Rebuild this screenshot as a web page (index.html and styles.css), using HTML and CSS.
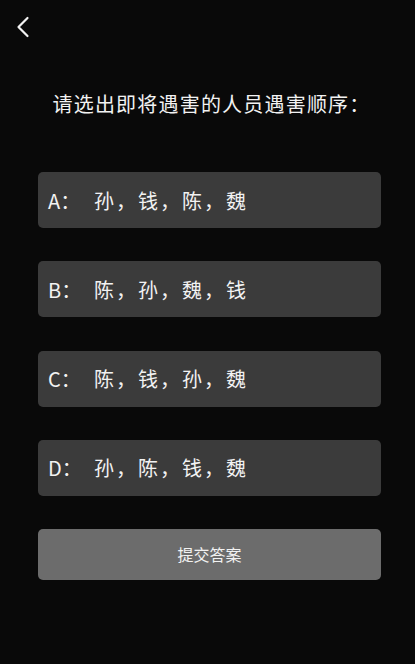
FILE: index.html
```html
<!DOCTYPE html>
<html lang="zh-CN">
<head>
    <meta charset="UTF-8">
    <meta name="viewport" content="width=device-width, initial-scale=1.0">
    <title>选择顺序</title>
    <link rel="stylesheet" href="styles.css">
</head>
<body>
    <div class="page">
        <div class="top-bar">
            <a class="back" href="#">
                <svg width="14" height="22" viewBox="0 0 14 22">
                    <polyline points="11.5,2 2.5,11 11.5,20" fill="none" stroke="#f2f2f2" stroke-width="2.2" stroke-linecap="round" stroke-linejoin="round"/>
                </svg>
            </a>
        </div>
        <h1 class="question">请选出即将遇害的人员遇害顺序：</h1>
        <div class="options">
            <div class="option"><span class="label">A：</span><span class="answer">孙，钱，陈，魏</span></div>
            <div class="option"><span class="label">B：</span><span class="answer">陈，孙，魏，钱</span></div>
            <div class="option"><span class="label">C：</span><span class="answer">陈，钱，孙，魏</span></div>
            <div class="option"><span class="label">D：</span><span class="answer">孙，陈，钱，魏</span></div>
        </div>
        <button class="submit">提交答案</button>
    </div>
</body>
</html>
```

FILE: styles.css
```css
body {
    margin: 0;
    background: #090909;
    color: #f2f2f2;
    font-family: "Noto Sans CJK SC", "Noto Sans", sans-serif;
}

.page {
    width: 415px;
    height: 664px;
    box-sizing: border-box;
    padding: 0 34px 0 38px;
}

.top-bar {
    height: 56px;
    margin-left: -22px;
    padding-top: 16px;
    box-sizing: border-box;
}

.back {
    display: block;
    width: 14px;
    height: 22px;
}

.back svg {
    display: block;
}

.question {
    margin: 23px -4px 0 0;
    font-size: 20px;
    font-weight: normal;
    letter-spacing: 1.2px;
    line-height: 50px;
    text-align: center;
}

.options {
    margin-top: 43px;
    display: flex;
    flex-direction: column;
    gap: 33.3px;
}

.option {
    height: 56px;
    background: #3b3b3b;
    border-radius: 5px;
    display: flex;
    align-items: center;
    padding-left: 10px;
    font-size: 20px;
}

.label {
    width: 46px;
}

.answer {
    letter-spacing: 2px;
}

.submit {
    display: block;
    width: 100%;
    height: 51px;
    margin-top: 33px;
    border: none;
    border-radius: 5px;
    background: #6c6c6c;
    color: #f2f2f2;
    font-family: "Noto Sans CJK SC", sans-serif;
    font-size: 16px;
}
```
